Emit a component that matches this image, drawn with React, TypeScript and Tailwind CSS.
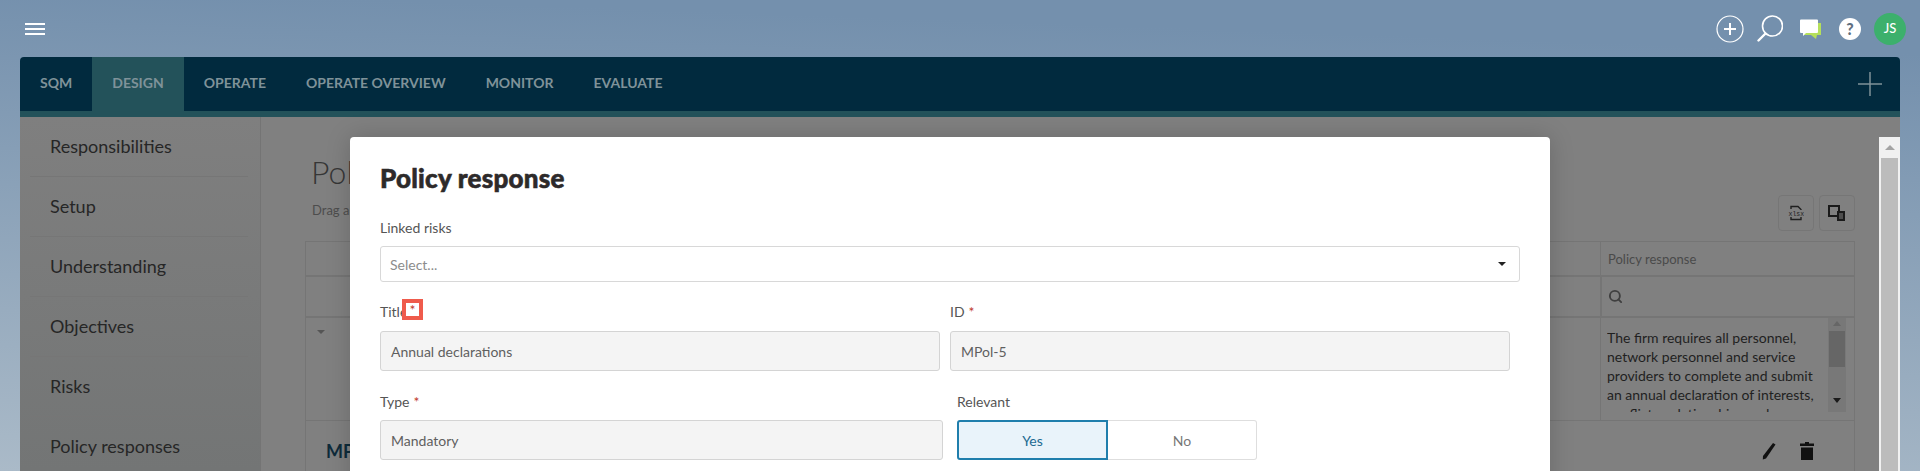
import React from "react";
import { Search } from "lucide-react";

const tabs = ["SQM", "DESIGN", "OPERATE", "OPERATE OVERVIEW", "MONITOR", "EVALUATE"];
const side = ["Responsibilities", "Setup", "Understanding", "Objectives", "Risks", "Policy responses"];

function Req() {
  return <span className="ml-1 text-[#c0392b]">*</span>;
}

function Field({ value, className }: { value: string; className: string }) {
  return (
    <div className={"flex h-10 items-center rounded-[3px] border border-[#d4d4d4] bg-[#f4f4f4] px-[10px] text-[14px] text-[#5f5f5f] " + className}>
      {value}
    </div>
  );
}

export default function App() {
  return (
    <div
      className="relative h-[471px] w-full overflow-hidden bg-[linear-gradient(182deg,#7490ad_10%,#aabac8_100%)] text-[#333]"
      style={{ fontFamily: "Lato, 'Noto Sans', sans-serif" }}
    >
      <header className="flex h-[57px] items-center justify-between pl-[25px] pr-[14px]">
        <div className="flex w-5 flex-col gap-[3px]">
          <span className="h-[2px] bg-white" />
          <span className="h-[2px] bg-white" />
          <span className="h-[2px] bg-white" />
        </div>
        <div className="flex items-center">
          <svg width="28" height="28" viewBox="0 0 28 28" fill="none" stroke="white" className="mr-[13px]">
            <circle cx="14" cy="14" r="13" strokeWidth="1.2" />
            <path d="M14 8v12M8 14h12" strokeWidth="2" />
          </svg>
          <svg width="26" height="28" viewBox="0 0 26 28" fill="none" stroke="white" className="mr-[16px]">
            <circle cx="15.5" cy="11" r="10" strokeWidth="1.6" />
            <path d="M8.5 18.5L1.5 25.5" strokeWidth="2.4" strokeLinecap="round" />
          </svg>
          <svg width="22" height="20" viewBox="0 0 22 20" className="mr-[18px]">
            <path d="M4 4h18v12h-4l-1 4-5-4H4z" fill="#b5e05a" />
            <path d="M1 1.5a1 1 0 0 1 1-1h16a1 1 0 0 1 1 1V13a1 1 0 0 1-1 1H7l-3 3v-3H2a1 1 0 0 1-1-1z" fill="white" />
          </svg>
          <span className="mr-[13px] flex h-[22px] w-[22px] items-center justify-center rounded-full bg-white text-[16px] font-black text-[#5f6f80]">?</span>
          <span className="flex h-8 w-8 items-center justify-center rounded-full bg-[#3cb06c] text-[13px] font-medium text-white">JS</span>
        </div>
      </header>

      <div className="mx-[20px] overflow-hidden rounded-t-[4px]">
        <nav className="flex h-[54px] items-stretch bg-[#012a3e]">
          {tabs.map((t) => (
            <div key={t} className={"flex items-center px-5 pb-[3px] text-[14px] font-bold text-[#7f9299] " + (t === "DESIGN" ? "bg-[#23525a] text-[#6f8688]" : "")}>
              {t}
            </div>
          ))}
          <div className="ml-auto flex items-center pr-[18px]">
            <svg width="24" height="24" viewBox="0 0 24 24" stroke="#7f9299" strokeWidth="1.5">
              <path d="M12 0v24M0 12h24" />
            </svg>
          </div>
        </nav>
        <div className="h-[6px] bg-[#23525a]" />
        <div className="flex h-[354px] bg-[#808080]">
          <aside className="w-[241px] shrink-0 border-r border-[#747474] bg-[linear-gradient(180deg,#7f7f7f,#737575)] pl-[10px] pr-[12px]">
            {side.map((s) => (
              <div key={s} className="flex h-[60px] items-center border-b border-[#767676] pl-5 text-[18px] text-[#262626]">
                {s}
              </div>
            ))}
          </aside>
          <main className="min-w-0 flex-1 pl-[44px] pr-[45px]">
            <div className="flex h-[124px] items-end justify-between pb-[10px]">
              <div className="self-start pl-[6px] pt-[35px]">
                <div className="text-[32px] font-light leading-10 text-[#363636]">Policy responses</div>
                <div className="ml-px mt-2 text-[13px] leading-5 text-[#4d4d4d]">Drag and drop</div>
              </div>
              <div className="flex gap-[5px]">
                <div className="flex h-9 w-9 items-center justify-center rounded-[4px] border border-[#767676]">
                  <svg width="16" height="16" viewBox="0 0 16 16" fill="none" stroke="#1f1f1f">
                    <path d="M3 4V1.5h7L13 4.5V5M3 12v2.5h10V12" strokeWidth="1.4" />
                    <text x="0.5" y="10.5" fontSize="6.5" stroke="none" fill="#1f1f1f" fontFamily="Liberation Mono, monospace">xlsx</text>
                  </svg>
                </div>
                <div className="flex h-9 w-9 items-center justify-center rounded-[4px] border border-[#767676]">
                  <svg width="18" height="16" viewBox="0 0 18 16" fill="none" stroke="#1a1a1a">
                    <path d="M1 1h10v10H1z" strokeWidth="2" />
                    <path d="M9 6h8v10H9z" fill="#1a1a1a" stroke="none" />
                    <path d="M11 9h4M11 11h4M11 13h4" stroke="#808080" />
                  </svg>
                </div>
              </div>
            </div>
            <div className="border-l border-r border-t border-[#757575]">
              <div className="flex h-[35px] border-b-2 border-[#757575]">
                <div className="flex-1" />
                <div className="flex w-[254px] items-center border-l border-[#757575] px-[7px] pt-[3px] text-[13px] text-[#4a4a4a]">Policy response</div>
              </div>
              <div className="flex h-[41px] border-b-2 border-[#757575]">
                <div className="flex-1" />
                <div className="flex w-[254px] items-center border-l-2 border-[#757575] px-[6px]">
                  <Search size={15} strokeWidth={3} className="text-[#3f3f3f]" />
                </div>
              </div>
              <div className="flex h-[103px] border-b border-[#757575]">
                <div className="flex-1 pl-[11px] pt-[12px]">
                  <span className="block h-0 w-0 border-x-[4px] border-t-[4px] border-x-transparent border-t-[#555]" />
                </div>
                <div className="flex w-[254px] border-l border-[#757575] pl-[6px]">
                  <div className="h-[94px] flex-1 overflow-hidden pt-[10px] text-[14px] leading-[19px] text-[#1f1f1f]">
                    The firm requires all personnel, network personnel and service providers to complete and submit an annual declaration of interests, conflicts, relationships and
                  </div>
                  <div className="ml-[2px] mr-[8px] flex h-[94px] w-[18px] shrink-0 flex-col items-center justify-between bg-[#787878] py-[3px]">
                    <span className="h-0 w-0 border-x-[4px] border-b-[5px] border-x-transparent border-b-[#666]" />
                    <span className="mb-auto mt-[5px] h-[36px] w-[16px] bg-[#666]" />
                    <span className="mb-[6px] h-0 w-0 border-x-[4px] border-t-[5px] border-x-transparent border-t-[#1a1a1a]" />
                  </div>
                </div>
              </div>
              <div className="flex h-[60px] items-center justify-between pl-5 pr-[40px]">
                <span className="text-[18px] font-bold text-[#0e2b3a]">MPol-5</span>
                <div className="flex items-center gap-[24px]">
                  <svg width="14" height="18" viewBox="0 0 14 18" fill="#111">
                    <path d="M11 1l2.5 1.5L4 16.5 0.8 17.6 1 14z" />
                  </svg>
                  <svg width="14" height="18" viewBox="0 0 14 18" fill="#111">
                    <path d="M5 0h4v1.5h5v2.5H0V1.5h5zM1 5.5h12V18H1z" />
                  </svg>
                </div>
              </div>
            </div>
          </main>
        </div>
      </div>

      <div className="absolute left-[350px] top-[137px] h-[400px] w-[1200px] rounded-t-[4px] bg-white px-[30px] pt-[25px] shadow-[0_0_24px_rgba(0,0,0,0.18)]">
        <h2 className="text-[26px] font-black leading-8 tracking-[0.25px] text-[#2d2a2a] [-webkit-text-stroke:0.6px_#2d2a2a]">Policy response</h2>
        <div className="mt-6 text-[14px] leading-5 text-[#555]">Linked risks</div>
        <div className="mt-2 flex h-9 w-[1140px] items-center justify-between rounded-[3px] border border-[#d8d8d8] pl-[9px] pr-[13px] text-[14px] text-[#8c8c8c]">
          Select...
          <span className="h-0 w-0 border-x-[4px] border-t-[4px] border-x-transparent border-t-[#222]" />
        </div>
        <div className="mt-5 flex gap-[10px]">
          <div className="w-[560px]">
            <div className="relative text-[14px] leading-5 text-[#555]">
              Title
              <span className="absolute left-[22px] top-[-3px] flex h-[21px] w-[21px] items-center justify-center border-[4px] border-[#ef5b4c] bg-white text-[#c0392b]">*</span>
            </div>
            <Field value="Annual declarations" className="mt-[9px]" />
          </div>
          <div className="w-[560px]">
            <div className="text-[14px] leading-5 text-[#555]">ID<Req /></div>
            <Field value="MPol-5" className="mt-[9px]" />
          </div>
        </div>
        <div className="mt-[21px] flex gap-[14px]">
          <div className="w-[563px]">
            <div className="text-[14px] leading-5 text-[#555]">Type<Req /></div>
            <Field value="Mandatory" className="mt-2" />
          </div>
          <div className="w-[300px]">
            <div className="text-[14px] leading-5 text-[#555]">Relevant</div>
            <div className="mt-2 flex h-10 text-[14px]">
              <div className="flex w-[151px] items-center justify-center rounded-l-[3px] border-2 border-[#1f7eac] bg-[#e9f3fa] text-[#1d6a91]">Yes</div>
              <div className="flex flex-1 items-center justify-center rounded-r-[3px] border border-l-0 border-[#dedede] text-[#777]">No</div>
            </div>
          </div>
        </div>
      </div>

      <div className="absolute bottom-0 left-[1879px] top-[137px] flex w-[21px] flex-col bg-[#f1f1f1]">
        <div className="flex h-[21px] items-center justify-center">
          <span className="h-0 w-0 border-x-[5px] border-b-[5px] border-x-transparent border-b-[#a3a3a3]" />
        </div>
        <div className="mx-[2px] flex-1 bg-[#bcbcbc]" />
      </div>
    </div>
  );
}
